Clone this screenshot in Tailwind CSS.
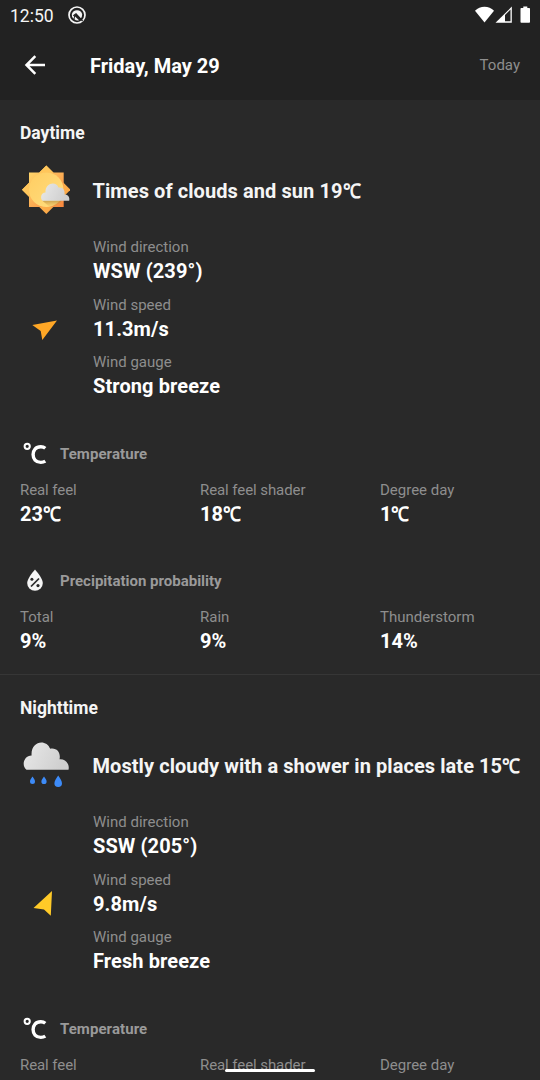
<!DOCTYPE html>
<html lang="en">
<head>
<meta charset="utf-8">
<title>Friday, May 29</title>
<script src="https://cdn.jsdelivr.net/npm/@tailwindcss/browser@4"></script>
</head>
<body class="relative flex h-[1080px] w-[540px] flex-col overflow-hidden bg-[#292929] font-[Roboto,sans-serif] text-[#f5f5f5]">
<svg class="absolute size-0" aria-hidden="true">
  <defs>
    <linearGradient id="sunA" x1="0" y1="0" x2="1" y2="1"><stop offset="0" stop-color="#ffd56a"/><stop offset="1" stop-color="#f8863d"/></linearGradient>
    <linearGradient id="sunB" x1="0.5" y1="0" x2="0.5" y2="1" gradientTransform="rotate(-45 .5 .5)"><stop offset="0" stop-color="#ffc95c"/><stop offset="1" stop-color="#fba344"/></linearGradient>
    <linearGradient id="sunC" x1="0" y1="0" x2="1" y2="1"><stop offset="0" stop-color="#ffcd62"/><stop offset="1" stop-color="#ffdf80"/></linearGradient>
    <linearGradient id="cloud" x1="0" y1="0" x2="1" y2="0.3"><stop offset="0" stop-color="#e9e9e9"/><stop offset="1" stop-color="#cfcfcf"/></linearGradient>
    <linearGradient id="shade" x1="0" y1="0" x2="0" y2="1"><stop offset="0" stop-color="#b58a3c" stop-opacity=".7"/><stop offset="1" stop-color="#e0a84c" stop-opacity="0"/></linearGradient>
    <symbol id="celsius" viewBox="0 0 30 30"><g fill="none" stroke="#fff"><circle cx="7.2" cy="6.300" r="2.6" stroke-width="2"/><path d="M25.300 8.300Q23.500 6.800 20.800 6.800C15.600 6.800 13.100 10.200 13.100 14.600S15.700 22.400 20.800 22.400Q23.500 22.400 25.300 21.200" stroke-width="3.4"/></g></symbol>
  </defs>
</svg>
<header class="h-[100px] shrink-0 bg-[#222222]">
  <div class="flex h-[30px] items-center pl-[10px] pr-[10px]">
    <span class="pt-px text-[17.5px] leading-[30px]">12:50</span>
    <svg class="ml-[14px] size-[18px]" viewBox="0 0 18 18"><circle cx="9" cy="9" r="8" fill="none" stroke="#f5f5f5" stroke-width="1.7"/><path d="M3.800 8.200A5.400 5.400 0 0 1 14.200 8.300Q14.200 11 12.700 12.500L8.300 8.200 6.200 9.200 5.700 12.800A5 5 0 0 1 3.800 8.200Z" fill="#f5f5f5"/><path d="M5.300 9.800 8 7.900 14.600 15" fill="none" stroke="#222" stroke-width="1.2"/><path d="M7 10.500 11 14.200Q8.300 15 6.500 13.200Z" fill="#f5f5f5"/></svg>
    <svg class="ml-auto h-[18px] w-[56px]" viewBox="474 6 56 18"><path d="M484.500 22.500 475 10.800Q479 6.800 484.500 6.800T494 10.800Z" fill="#fff"/><path d="M495.500 22.800 511.800 6.600V22.800Z" fill="#fff"/><path d="M505 21.300V14.900L510.500 9.600V21.300Z" fill="#222"/><path d="M523.300 6.500H527.300V8H529.200Q530 8 530 8.800V22Q530 22.800 529.200 22.800H521.300Q520.500 22.800 520.500 22V8.800Q520.500 8 521.300 8H523.300Z" fill="#fff"/></svg>
  </div>
  <div class="flex h-[70px] items-center pl-[20px] pr-[20px]">
    <svg class="size-[30px]" viewBox="0 0 30 30"><path d="M25 15H6.800M15.300 6.200 6.500 15 15.300 23.800" fill="none" stroke="#fff" stroke-width="2.5"/></svg>
    <h1 class="ml-10 pt-[2px] text-[20px] font-bold leading-[24px] text-white">Friday, May 29</h1>
    <span class="ml-auto pt-px text-[15px] text-[#8e8e8e]">Today</span>
  </div>
</header>
<main>
  <section class="h-[575px] border-b border-[#363636] px-5 pt-[21px]">
    <h2 class="text-[17.5px] font-bold leading-[24px]">Daytime</h2>
    <div class="mt-[20px] flex h-[50px] items-center gap-[22.500px]">
      <svg class="size-[50px] shrink-0" viewBox="0 0 50 50"><path d="M26.300 .5 50.500 24.800 26.300 49 2 24.800Z" fill="url(#sunB)"/><path d="M9 7.500H43.700V42H9Z" fill="url(#sunA)"/><path d="M26.300 .5 33.300 7.500H19.300ZM2 24.800 9 17.800V31.800Z" fill="#ffc65b"/><circle cx="26.300" cy="24.800" r="17.300" fill="url(#sunC)"/><path d="M22 35.500H42Q37 42 31 43Z" fill="url(#shade)"/><path d="M22.500 35.800C20 33.500 20.800 27.500 25.500 27.500 25 17.500 36.500 16 38.500 22.500 43 21.700 45.300 25.500 44.500 29.500 48 29.500 50 32 49.200 35.800Z" fill="url(#cloud)"/></svg>
      <p class="whitespace-nowrap pt-[2px] text-[20px] font-bold leading-[24px] tracking-[0.08px]">Times of clouds and sun 19<span class="inline-block origin-left scale-x-90">℃</span></p>
    </div>
    <div class="mt-[19.500px] flex gap-[23px]">
      <svg class="mt-[68.500px] size-[50px] shrink-0" viewBox="0 0 50 50"><path d="M37 17.500 22.300 37 20.700 28 12.300 22Z" fill="#ffa726"/></svg>
      <dl class="text-[20px] leading-[24px] tracking-[0.1px]">
        <dt class="text-[15px] leading-[24px] tracking-normal text-[#8e8e8e]">Wind direction</dt><dd class="mb-[10px] font-bold text-white">WSW (239°)</dd>
        <dt class="text-[15px] leading-[24px] tracking-normal text-[#8e8e8e]">Wind speed</dt><dd class="mb-[9px] font-bold text-white">11.3m/s</dd>
        <dt class="text-[15px] leading-[24px] tracking-normal text-[#8e8e8e]">Wind gauge</dt><dd class="font-bold text-white">Strong breeze</dd>
      </dl>
    </div>
    <div class="mt-[42px] flex h-[30px] items-center gap-[10px]">
      <svg class="size-[30px]"><use href="#celsius"/></svg>
      <h3 class="text-[15px] font-bold tracking-[0.07px] text-[#9a9a9a]">Temperature</h3>
    </div>
    <dl class="mt-[8.500px] grid grid-cols-[180px_180px_1fr] text-[20px] leading-[24px]">
      <div><dt class="text-[15px] leading-[24px] tracking-[-0.08px] text-[#8e8e8e]">Real feel</dt><dd class="font-bold text-white">23<span class="inline-block origin-left scale-x-90">℃</span></dd></div>
      <div><dt class="text-[15px] leading-[24px] tracking-[-0.08px] text-[#8e8e8e]">Real feel shader</dt><dd class="font-bold text-white">18<span class="inline-block origin-left scale-x-90">℃</span></dd></div>
      <div><dt class="text-[15px] leading-[24px] text-[#8e8e8e]">Degree day</dt><dd class="font-bold text-white">1<span class="inline-block origin-left scale-x-90">℃</span></dd></div>
    </dl>
    <div class="mt-[40px] flex h-[30px] items-center gap-[10px]">
      <svg class="size-[30px]" viewBox="0 0 30 30"><path d="M15 3.500C18 7 22.800 13 22.800 17A7.800 7.800 0 0 1 7.200 17C7.200 13 12 7 15 3.500Z" fill="#f5f5f5"/><g stroke="#292929" fill="#292929"><path d="M19 12.500 11 20.500" stroke-width="1.700"/><circle cx="11.900" cy="13.300" r="1.500" stroke="none"/><circle cx="18" cy="19.600" r="1.600" stroke="none"/></g></svg>
      <h3 class="text-[15px] font-bold text-[#9a9a9a]">Precipitation probability</h3>
    </div>
    <dl class="mt-[8.500px] grid grid-cols-[180px_180px_1fr] text-[20px] leading-[24px]">
      <div><dt class="text-[15px] leading-[24px] text-[#8e8e8e]">Total</dt><dd class="font-bold text-white">9%</dd></div>
      <div><dt class="text-[15px] leading-[24px] text-[#8e8e8e]">Rain</dt><dd class="font-bold text-white">9%</dd></div>
      <div><dt class="text-[15px] leading-[24px] text-[#8e8e8e]">Thunderstorm</dt><dd class="font-bold text-white">14%</dd></div>
    </dl>
  </section>
  <section class="px-5 pt-[21px]">
    <h2 class="text-[17.5px] font-bold leading-[24px]">Nighttime</h2>
    <div class="mt-[20px] flex h-[50px] items-center gap-[22.500px]">
      <svg class="size-[50px] shrink-0" viewBox="0 0 50 50"><path d="M6.500 29.800C1 25.500 4 15.500 11.600 15.500 10.500 .5 26.500 -1.500 30.200 8.800 37 7.500 41 13 39.500 19.300 45 18.500 50 24 48.500 29.800Z" fill="url(#cloud)"/><g fill="#3d8bf8"><path d="M12.500 36.500C14 38.500 15 40 15 41.400A2.500 2.500 0 0 1 10 41.400C10 40 11 38.500 12.500 36.500ZM24 36.500C25.500 38.500 26.600 40 26.600 41.400A2.600 2.600 0 0 1 21.400 41.400C21.400 40 22.500 38.500 24 36.500ZM38.200 35.600C40 38.500 42 41 42 43.200A3.800 3.800 0 0 1 34.400 43.200C34.400 41 36.400 38.500 38.200 35.600Z"/></g></svg>
      <p class="whitespace-nowrap pt-[2px] text-[20px] font-bold leading-[24px] tracking-[0.07px]">Mostly cloudy with a shower in places late 15<span class="inline-block origin-left scale-x-90">℃</span></p>
    </div>
    <div class="mt-[19.500px] flex gap-[23px]">
      <svg class="mt-[68.500px] size-[50px] shrink-0" viewBox="0 0 50 50"><path d="M32 13 30.800 37.800 24 31.500 13.500 30Z" fill="#ffca28"/></svg>
      <dl class="text-[20px] leading-[24px] tracking-[0.1px]">
        <dt class="text-[15px] leading-[24px] tracking-normal text-[#8e8e8e]">Wind direction</dt><dd class="mb-[10px] font-bold text-white">SSW (205°)</dd>
        <dt class="text-[15px] leading-[24px] tracking-normal text-[#8e8e8e]">Wind speed</dt><dd class="mb-[9px] font-bold text-white">9.8m/s</dd>
        <dt class="text-[15px] leading-[24px] tracking-normal text-[#8e8e8e]">Wind gauge</dt><dd class="font-bold text-white">Fresh breeze</dd>
      </dl>
    </div>
    <div class="mt-[42px] flex h-[30px] items-center gap-[10px]">
      <svg class="size-[30px]"><use href="#celsius"/></svg>
      <h3 class="text-[15px] font-bold tracking-[0.07px] text-[#9a9a9a]">Temperature</h3>
    </div>
    <dl class="mt-[8.500px] grid grid-cols-[180px_180px_1fr] text-[15px] leading-[24px] text-[#8e8e8e]">
      <dt class="tracking-[-0.08px]">Real feel</dt><dt class="tracking-[-0.08px]">Real feel shader</dt><dt>Degree day</dt>
    </dl>
  </section>
</main>
<div class="absolute left-[225px] top-[1069px] h-[3px] w-[90px] rounded-full bg-white"></div>
</body>
</html>
